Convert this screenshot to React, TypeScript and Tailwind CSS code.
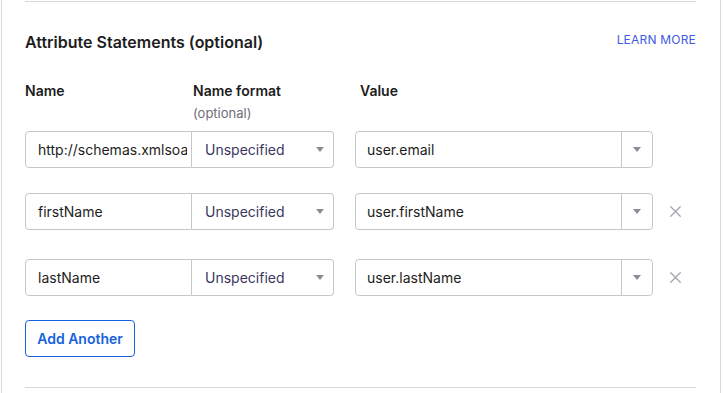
import { X } from 'lucide-react';

type Row = { name: string; value: string; removable: boolean; top: string };

const rows: Row[] = [
  { name: 'http://schemas.xmlsoap.org/ws/2005/05/identity/claims/emailaddress', value: 'user.email', removable: false, top: 'mt-[9px]' },
  { name: 'firstName', value: 'user.firstName', removable: true, top: 'mt-[25px]' },
  { name: 'lastName', value: 'user.lastName', removable: true, top: 'mt-[29px]' },
];

function Caret() {
  return (
    <svg width="8" height="5" viewBox="0 0 8 5" className="shrink-0">
      <path d="M0 0 L8 0 L4 5 Z" fill="#8c8c96" />
    </svg>
  );
}

function AttributeRow({ row }: { row: Row }) {
  return (
    <div className={`flex items-center h-[37px] ${row.top}`}>
      {/* name + format group */}
      <div className="flex h-full w-[309px]">
        <input
          readOnly
          value={row.name}
          className="w-[167px] h-full border border-[#c6c6cd] rounded-l-[4px] pl-[12px] pr-[4px] text-[14px] text-[#1d1d21] outline-none bg-white"
        />
        <div className="flex-1 h-full border border-l-0 border-[#c6c6cd] rounded-r-[4px] flex items-center justify-between pl-[13px] pr-[9px]">
          <span className="text-[14px] text-[#3a3760]">Unspecified</span>
          <Caret />
        </div>
      </div>

      {/* value combobox */}
      <div className="ml-[21px] flex h-full w-[298px] border border-[#c6c6cd] rounded-[4px]">
        <div className="flex-1 flex items-center pl-[11px] text-[14px] text-[#1d1d21]">{row.value}</div>
        <div className="w-[31px] border-l border-[#c6c6cd] flex items-center justify-center">
          <Caret />
        </div>
      </div>

      {row.removable && (
        <button className="ml-[13px] text-[#a3a3ad]">
          <X className="w-[19px] h-[19px]" strokeWidth={1.6} />
        </button>
      )}
    </div>
  );
}

export default function App() {
  return (
    <div className="w-[724px] h-[393px] bg-white overflow-hidden font-['Inter',sans-serif]">
      <div className="ml-[1px] w-[720px] h-full border-l border-r border-[#d7d7dc] pl-[23px] pr-[24px] pt-[1px]">
        <div className="border-t border-[#d7d7dc]" />

        {/* header */}
        <div className="flex justify-between items-start mt-[30px]">
          <h2 className="text-[16px] font-semibold text-[#1d1d21] leading-[20px]">Attribute Statements (optional)</h2>
          <a className="text-[12px] tracking-[0.2px] text-[#3f59e4] mt-[1px] leading-[14px]">LEARN MORE</a>
        </div>

        {/* column labels */}
        <div className="flex mt-[30px] text-[14px] leading-[17px]">
          <div className="w-[168px] font-semibold text-[#1d1d21]">Name</div>
          <div className="w-[167px]">
            <div className="font-semibold text-[#1d1d21]">Name format</div>
            <div className="text-[#6e6e78] mt-[6px] text-[13px]">(optional)</div>
          </div>
          <div className="font-semibold text-[#1d1d21]">Value</div>
        </div>

        {rows.map((r) => (
          <AttributeRow key={r.value} row={r} />
        ))}

        <button className="mt-[24px] h-[37px] w-[110px] border border-[#1662dd] rounded-[4px] text-[14px] font-semibold text-[#1662dd]">
          Add Another
        </button>

        <div className="mt-[30px] border-t border-[#d7d7dc]" />
      </div>
    </div>
  );
}
